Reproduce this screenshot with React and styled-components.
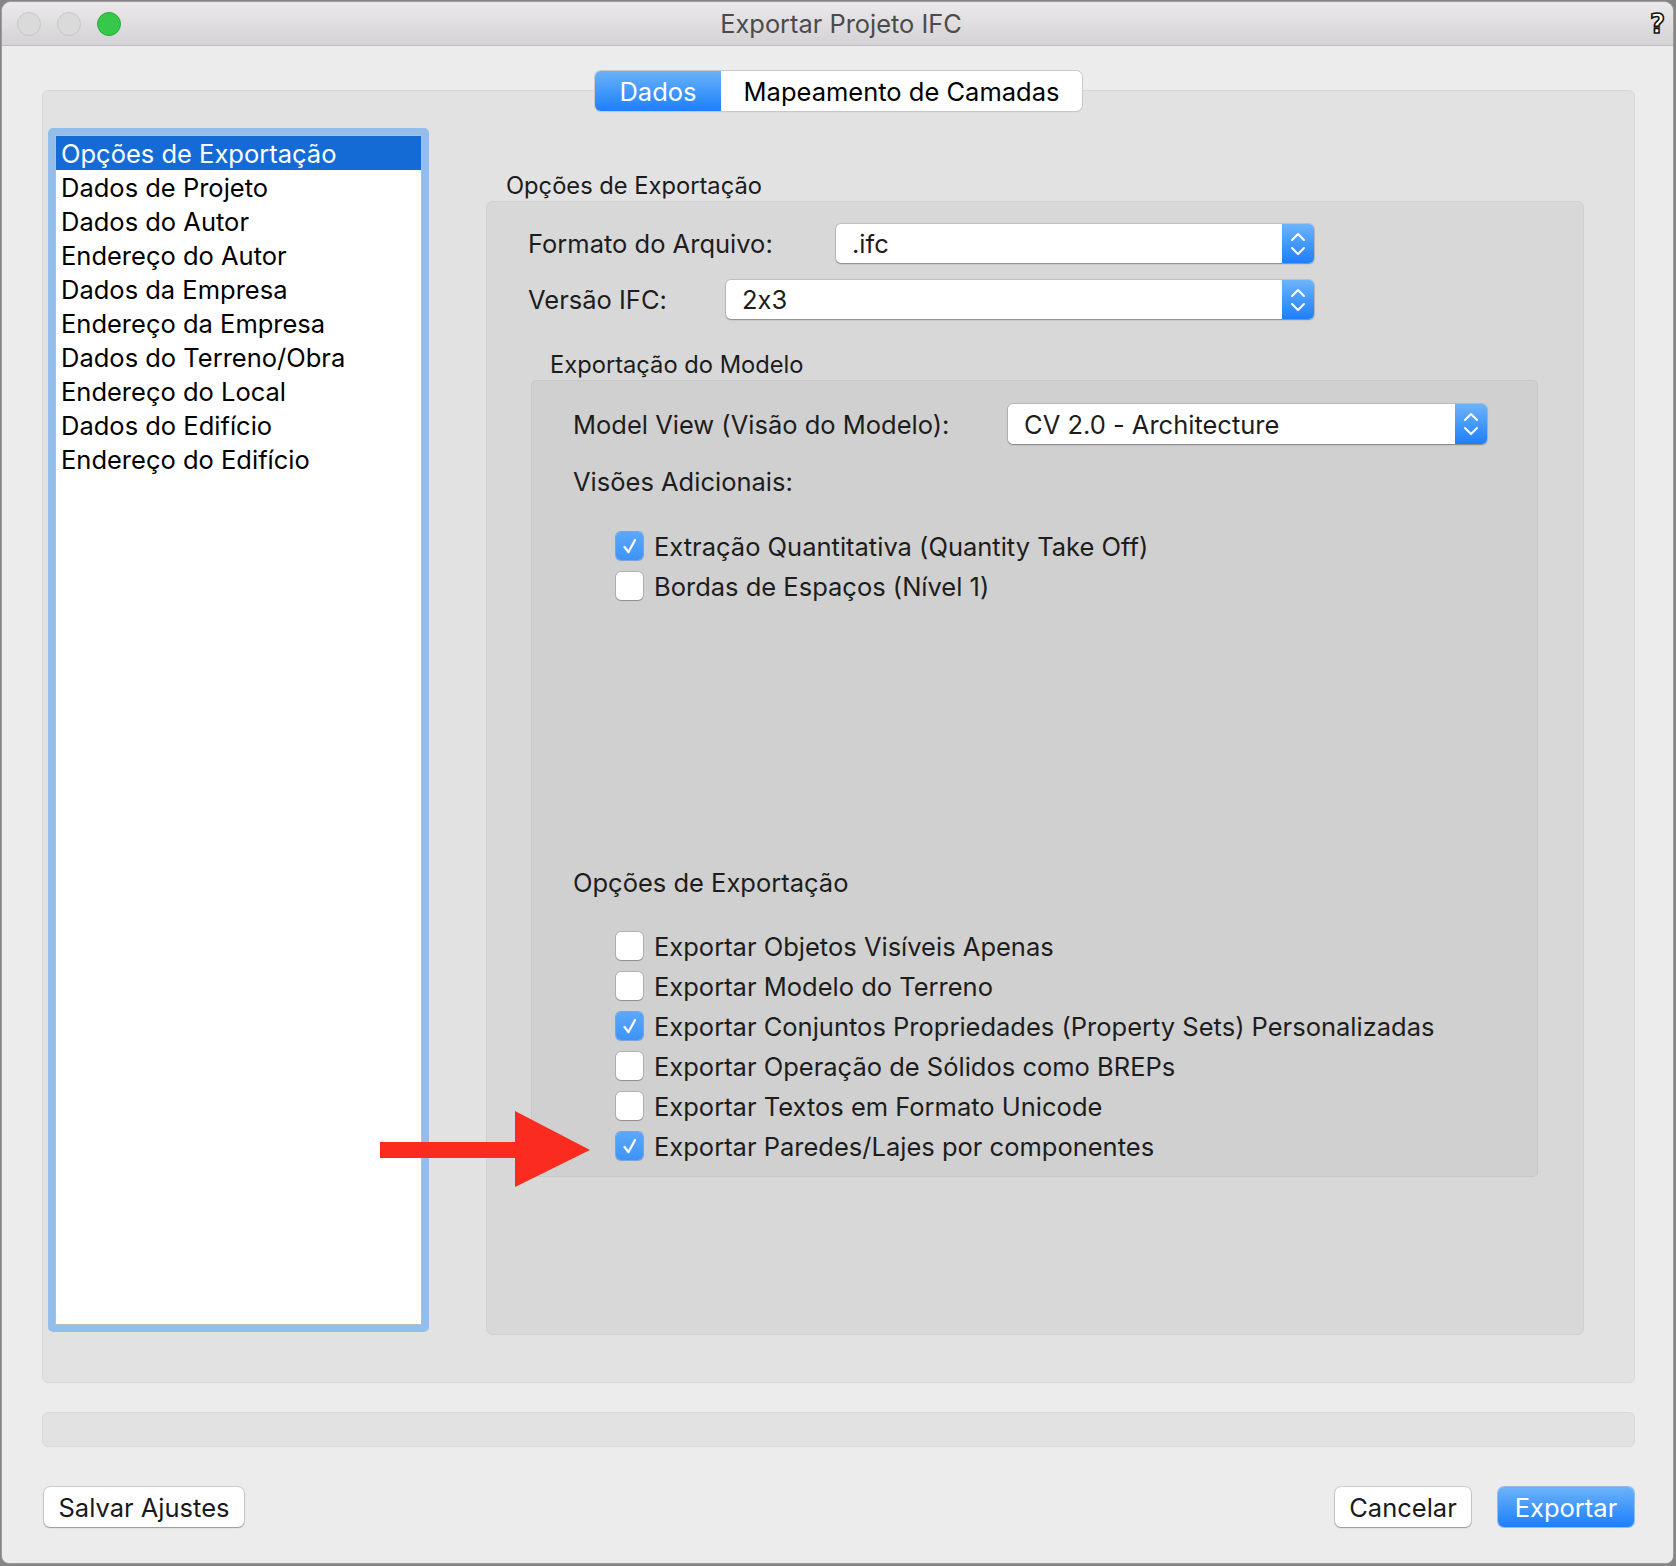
import React from 'react';
import styled, { createGlobalStyle } from 'styled-components';

const GlobalStyle = createGlobalStyle`
  html, body {
    margin: 0;
    padding: 0;
    background: #858585;
  }
  body {
    font-family: Inter, "Noto Sans", sans-serif;
    font-feature-settings: "calt" 0;
    -webkit-font-smoothing: antialiased;
  }
  * { box-sizing: border-box; }
`;

const TEXT = '25.5px';

const Window = styled.div`
  position: relative;
  margin: 1px 0 0 1px;
  width: 1673px;
  height: 1563px;
  border: 1px solid #9c9c9c;
  border-radius: 10px 10px 8px 8px;
  background: #ececec;
  overflow: hidden;
  display: flex;
  flex-direction: column;
`;

const TitleBar = styled.div`
  height: 44px;
  flex: none;
  display: grid;
  grid-template-columns: 1fr auto 1fr;
  align-items: center;
  padding: 0 8px 0 15px;
  background: linear-gradient(#ebe9eb, #d4d2d4);
  border-bottom: 1px solid #bdbdbd;
`;

const Lights = styled.div`
  display: flex;
  gap: 16px;
  align-items: center;
`;

const Light = styled.span`
  width: 24px;
  height: 24px;
  border-radius: 50%;
  background: ${p => (p.$on ? '#35c84a' : '#dadada')};
  border: 1px solid ${p => (p.$on ? '#2aab3d' : '#c6c6c6')};
`;

const Title = styled.div`
  font-size: 25.4px;
  color: #4b4b4b;
`;

const Help = styled.div`
  justify-self: end;
  font-family: "DejaVu Sans", sans-serif;
  font-weight: bold;
  font-size: 26px;
  line-height: 1;
  color: #fff;
  -webkit-text-stroke: 1.6px #111;
`;

const Body = styled.div`
  flex: 1;
  display: flex;
  flex-direction: column;
  padding: 25px 38px 0 40px;
`;

const TabRow = styled.div`
  position: relative;
  z-index: 1;
  display: flex;
  justify-content: center;
  height: 40px;
  margin-bottom: -21px;
`;

const Segmented = styled.div`
  display: flex;
  border-radius: 6px;
  overflow: hidden;
  box-shadow: 0 0 0 1px #c9c9c9, 0 1px 1px rgba(0, 0, 0, 0.18);
`;

const Tab = styled.div`
  width: ${p => p.$w}px;
  display: flex;
  align-items: center;
  justify-content: center;
  font-size: ${TEXT};
  color: ${p => (p.$active ? '#fff' : '#000')};
  background: ${p => (p.$active ? 'linear-gradient(#6bb2fa, #1b80fb)' : '#fff')};
`;

const Panel = styled.div`
  height: 1293px;
  flex: none;
  display: flex;
  align-items: flex-start;
  background: #e2e2e2;
  border: 1px solid #d7d7d7;
  border-radius: 6px;
`;

const ListFrame = styled.div`
  margin: 37px 0 0 5px;
  padding: 7px;
  background: #93bdeb;
  border-radius: 5px;
`;

const ListBox = styled.div`
  width: 367px;
  height: 1190px;
  background: #fff;
  border: 1px solid #bdbdbd;
`;

const ListItem = styled.div`
  height: 34px;
  display: flex;
  align-items: center;
  padding-left: 5px;
  font-size: ${TEXT};
  white-space: nowrap;
  color: ${p => (p.$selected ? '#fff' : '#000')};
  background: ${p => (p.$selected ? '#156bd6' : 'transparent')};
`;

const RightColumn = styled.div`
  margin: 80px 0 0 57px;
  width: 1098px;
`;

const GroupTitle = styled.div`
  height: 30px;
  line-height: 30px;
  font-size: 23.7px;
  color: #1c1c1c;
  padding-left: ${p => p.$indent || 0}px;
  margin-top: ${p => p.$top || 0}px;
`;

const GroupBox = styled.div`
  height: 1134px;
  padding-top: 22px;
  background: #d8d8d8;
  border: 1px solid #d0d0d0;
  border-radius: 6px;
`;

const FieldRow = styled.div`
  display: flex;
  align-items: center;
  justify-content: space-between;
  height: ${p => p.$h || 39}px;
  margin-top: ${p => p.$top || 0}px;
  padding: ${p => p.$pad};
`;

const Label = styled.span`
  font-size: ${TEXT};
  color: #1d1d1d;
  white-space: nowrap;
`;

const SelectBox = styled.div`
  width: ${p => p.$w}px;
  height: 100%;
  display: flex;
  background: #fff;
  border-radius: 5px;
  box-shadow: 0 0 0 1px rgba(0, 0, 0, 0.1), 0 1px 1.5px rgba(0, 0, 0, 0.3);
`;

const SelectValue = styled.div`
  flex: 1;
  display: flex;
  align-items: center;
  padding-left: 16px;
  font-size: ${TEXT};
  color: #1d1d1d;
`;

const Stepper = styled.div`
  width: 32px;
  display: flex;
  align-items: center;
  justify-content: center;
  border-radius: 0 5px 5px 0;
  background: linear-gradient(#6db3fa, #1c80fb);
`;

const InnerBox = styled.div`
  height: 797px;
  margin: 0 45px 0 44px;
  padding-top: 23px;
  background: #d0d0d0;
  border: 1px solid #c8c8c8;
  border-radius: 5px;
`;

const Heading = styled.div`
  height: 30px;
  line-height: 30px;
  font-size: ${TEXT};
  color: #1d1d1d;
  padding-left: 41px;
  margin-top: ${p => p.$top}px;
`;

const CheckList = styled.div`
  margin-top: ${p => p.$top}px;
  padding-left: 84px;
  display: flex;
  flex-direction: column;
`;

const CheckRow = styled.div`
  height: 40px;
  display: flex;
  align-items: center;
  gap: 11px;
  font-size: ${TEXT};
  color: #1d1d1d;
  white-space: nowrap;
`;

const Box = styled.span`
  width: 27px;
  height: 28px;
  flex: none;
  display: flex;
  align-items: center;
  justify-content: center;
  border-radius: 5px;
  background: ${p => (p.$checked ? 'linear-gradient(#5aa8fb, #3c93f7)' : '#fff')};
  box-shadow: ${p =>
    p.$checked
      ? '0 0 0 1px rgba(40, 120, 230, 0.5)'
      : '0 0 0 1px rgba(0, 0, 0, 0.14), 0 1px 1px rgba(0, 0, 0, 0.2)'};
`;

const StatusBar = styled.div`
  height: 35px;
  flex: none;
  margin-top: 29px;
  background: #e2e2e2;
  border: 1px solid #d9d9d9;
  border-radius: 6px;
`;

const ButtonRow = styled.div`
  display: flex;
  align-items: center;
  gap: 27px;
  margin: 40px 1px 0 2px;
  height: 40px;
`;

const Spacer = styled.div`
  flex: 1;
`;

const Button = styled.div`
  width: ${p => p.$w}px;
  height: 40px;
  display: flex;
  align-items: center;
  justify-content: center;
  font-size: ${TEXT};
  border-radius: 6px;
  color: ${p => (p.$primary ? '#fff' : '#1a1a1a')};
  background: ${p => (p.$primary ? 'linear-gradient(#6cb3fa, #1b7ffb)' : '#fff')};
  box-shadow: ${p =>
    p.$primary
      ? '0 0 0 1px rgba(20, 110, 240, 0.4)'
      : '0 0 0 1px rgba(0, 0, 0, 0.12), 0 1px 1.5px rgba(0, 0, 0, 0.28)'};
`;

const Arrow = styled.svg`
  position: absolute;
  left: 378px;
  top: 1109px;
`;

const Chevrons = () => (
  <svg width="16" height="26" viewBox="0 0 16 26">
    <path d="M2 9 L8 3 L14 9 M2 17 L8 23 L14 17" fill="none" stroke="#fff" strokeWidth="2" strokeLinecap="round" strokeLinejoin="round" />
  </svg>
);

const Select = ({ w, value }) => (
  <SelectBox $w={w}>
    <SelectValue>{value}</SelectValue>
    <Stepper>
      <Chevrons />
    </Stepper>
  </SelectBox>
);

const Check = ({ checked, children }) => (
  <CheckRow>
    <Box $checked={checked}>
      {checked && (
        <svg width="16" height="18" viewBox="0 0 16 18">
          <path d="M2.5 10 L6.5 15 L13 3" fill="none" stroke="#fff" strokeWidth="2.3" strokeLinecap="round" strokeLinejoin="round" />
        </svg>
      )}
    </Box>
    {children}
  </CheckRow>
);

const sections = [
  'Opções de Exportação',
  'Dados de Projeto',
  'Dados do Autor',
  'Endereço do Autor',
  'Dados da Empresa',
  'Endereço da Empresa',
  'Dados do Terreno/Obra',
  'Endereço do Local',
  'Dados do Edifício',
  'Endereço do Edifício',
];

const views = [
  { label: 'Extração Quantitativa (Quantity Take Off)', checked: true },
  { label: 'Bordas de Espaços (Nível 1)', checked: false },
];

const options = [
  { label: 'Exportar Objetos Visíveis Apenas', checked: false },
  { label: 'Exportar Modelo do Terreno', checked: false },
  { label: 'Exportar Conjuntos Propriedades (Property Sets) Personalizadas', checked: true },
  { label: 'Exportar Operação de Sólidos como BREPs', checked: false },
  { label: 'Exportar Textos em Formato Unicode', checked: false },
  { label: 'Exportar Paredes/Lajes por componentes', checked: true },
];

const App = () => {
  return (
    <>
      <GlobalStyle />
      <Window>
        <TitleBar>
          <Lights>
            <Light />
            <Light />
            <Light $on />
          </Lights>
          <Title>Exportar Projeto IFC</Title>
          <Help>?</Help>
        </TitleBar>

        <Body>
          <TabRow>
            <Segmented>
              <Tab $w={126} $active>Dados</Tab>
              <Tab $w={361}>Mapeamento de Camadas</Tab>
            </Segmented>
          </TabRow>

          <Panel>
            <ListFrame>
              <ListBox>
                {sections.map((s, i) => (
                  <ListItem key={s} $selected={i === 0}>{s}</ListItem>
                ))}
              </ListBox>
            </ListFrame>

            <RightColumn>
              <GroupTitle $indent={20}>Opções de Exportação</GroupTitle>
              <GroupBox>
                <FieldRow $pad="0 269px 0 41px">
                  <Label>Formato do Arquivo:</Label>
                  <Select w={478} value=".ifc" />
                </FieldRow>
                <FieldRow $pad="0 269px 0 41px" $top={17}>
                  <Label>Versão IFC:</Label>
                  <Select w={588} value="2x3" />
                </FieldRow>

                <GroupTitle $indent={63} $top={31}>Exportação do Modelo</GroupTitle>
                <InnerBox>
                  <FieldRow $pad="0 50px 0 41px" $h={40}>
                    <Label>Model View (Visão do Modelo):</Label>
                    <Select w={479} value="CV 2.0 - Architecture" />
                  </FieldRow>

                  <Heading $top={23}>Visões Adicionais:</Heading>
                  <CheckList $top={29}>
                    {views.map(v => (
                      <Check key={v.label} checked={v.checked}>{v.label}</Check>
                    ))}
                  </CheckList>

                  <Heading $top={262}>Opções de Exportação</Heading>
                  <CheckList $top={28}>
                    {options.map(o => (
                      <Check key={o.label} checked={o.checked}>{o.label}</Check>
                    ))}
                  </CheckList>
                </InnerBox>
              </GroupBox>
            </RightColumn>
          </Panel>

          <StatusBar />

          <ButtonRow>
            <Button $w={200}>Salvar Ajustes</Button>
            <Spacer />
            <Button $w={136}>Cancelar</Button>
            <Button $w={136} $primary>Exportar</Button>
          </ButtonRow>
        </Body>

        <Arrow width="210" height="76" viewBox="0 0 210 76">
          <polygon points="0,31 135,31 135,0 210,39 135,76 135,47 0,47" fill="#fc2b20" />
        </Arrow>
      </Window>
    </>
  );
};

export default App;
